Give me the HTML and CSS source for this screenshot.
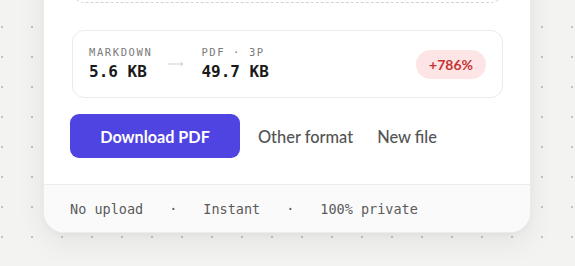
FILE: index.html
```html
<!DOCTYPE html>
<html>
<head>
<meta charset="utf-8">
<link rel="stylesheet" href="styles.css">
</head>
<body>
<div class="card">
  <div class="card-body">
    <div class="dropzone"></div>
    <div class="stats">
      <div class="col">
        <div class="label">MARKDOWN</div>
        <div class="value">5.6 KB</div>
      </div>
      <svg class="arrow" width="16" height="6" viewBox="0 0 16 6"><path d="M0 3H15M12.5 1L15 3L12.5 5" fill="none" stroke="#cfcfcf" stroke-width="1"/></svg>
      <div class="col">
        <div class="label">PDF · 3P</div>
        <div class="value">49.7 KB</div>
      </div>
      <div class="badge">+786%</div>
    </div>
    <div class="actions">
      <button class="primary">Download PDF</button>
      <button class="ghost">Other format</button>
      <button class="ghost">New file</button>
    </div>
  </div>
  <div class="footer">
    <span>No upload</span><span class="sep">·</span><span>Instant</span><span class="sep">·</span><span>100% private</span>
  </div>
</div>
</body>
</html>
```
FILE: styles.css
```css
html, body { margin: 0; padding: 0; }
body {
  width: 575px;
  height: 266px;
  overflow: hidden;
  background-color: #f3f3f2;
  background-image: radial-gradient(circle at center, #c2c2c2 1px, transparent 1.4px);
  background-size: 30px 30px;
  background-position: 17px 12px;
  font-family: "Lato", "Noto Sans", sans-serif;
}
.card {
  width: 486px;
  margin: -158px 0 0 44px;
  background: #fff;
  border-radius: 20px;
  box-shadow: 0 0 0 1px #ececec, 0 10px 30px rgba(0,0,0,0.07), 0 2px 6px rgba(0,0,0,0.04);
  overflow: hidden;
}
.card-body {
  padding: 28px 27px 26px 28px;
}
.dropzone {
  height: 131px;
  border: 1.5px dashed #d2d2d2;
  border-radius: 12px;
  margin-bottom: 27px;
}
.stats {
  height: 66px;
  border: 1px solid #ebebeb;
  border-radius: 12px;
  display: flex;
  align-items: center;
  padding: 0 16px;
  gap: 16px;
}
.col { display: flex; flex-direction: column; }
.label {
  font-family: "DejaVu Sans Mono", monospace;
  font-size: 10.5px;
  letter-spacing: 1.6px;
  color: #7a7a7a;
  line-height: 13px;
}
.value {
  font-family: "DejaVu Sans Mono", monospace;
  font-weight: bold;
  font-size: 16px;
  color: #1a1a1a;
  line-height: 20px;
  margin-top: 3px;
}
.arrow { margin-right: 1px; }
.badge {
  margin-left: auto;
  background: #fde5e5;
  color: #c53434;
  font-weight: bold;
  font-size: 14px;
  height: 29px;
  line-height: 29px;
  padding: 0 13px;
  border-radius: 15px;
}
.actions {
  display: flex;
  align-items: center;
  margin: 16px 0 0 -2px;
}
button {
  font-family: inherit;
  border: none;
  background: none;
  cursor: pointer;
}
.primary {
  width: 170px;
  height: 44px;
  border-radius: 9px;
  background: #4f44e2;
  color: #fff;
  font-size: 16.2px;
  font-weight: bold;
  margin-right: 6px;
}
.ghost {
  padding: 0 12px;
  height: 44px;
  color: #545454;
  font-size: 16.4px;
  font-weight: 500;
}
.footer {
  background: #fafafa;
  border-top: 1px solid #ececec;
  height: 47px;
  display: flex;
  align-items: center;
  gap: 26px;
  padding-left: 26px;
  font-family: "DejaVu Sans Mono", monospace;
  font-size: 13.5px;
  color: #5a5a5a;
}
```
